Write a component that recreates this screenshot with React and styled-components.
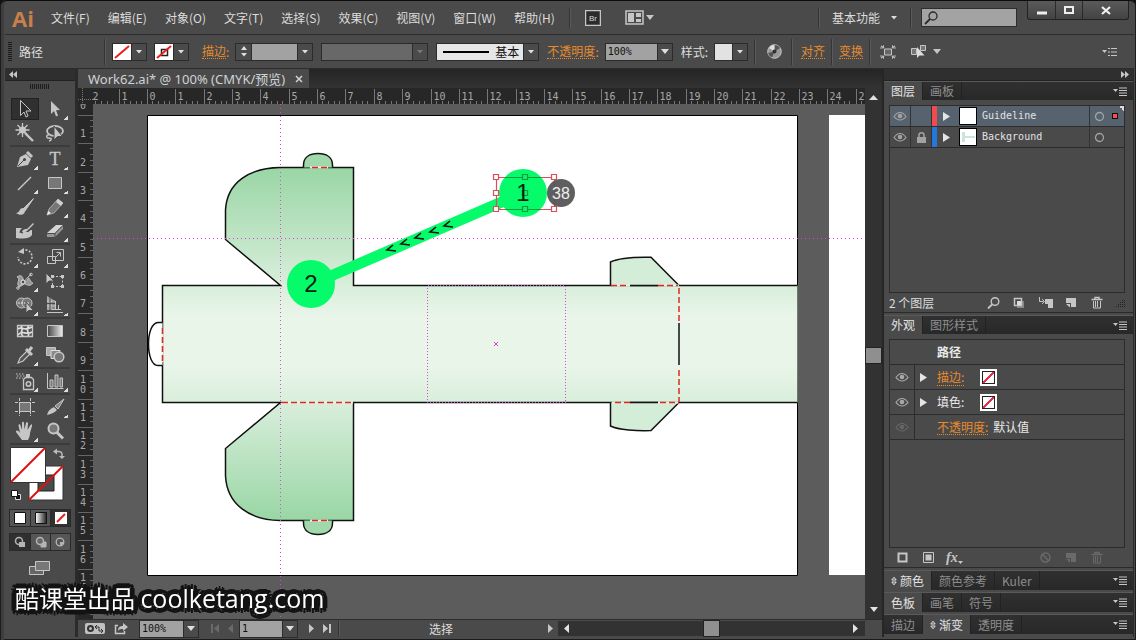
import React from 'react';
import styled, { createGlobalStyle, css } from 'styled-components';

const GlobalStyle = createGlobalStyle`
  * {
    box-sizing: border-box;
  }
  body {
    margin: 0;
    background: #111;
    color: #dcdcdc;
    font-family: 'Noto Sans CJK SC', 'Liberation Sans', sans-serif;
    font-size: 12px;
    line-height: 16px;
    overflow: hidden;
  }
  button, input, select {
    margin: 0;
    padding: 0;
    border: 0;
    border-radius: 0;
    background: none;
    color: inherit;
    font: inherit;
    outline: none;
  }
  select {
    appearance: none;
  }
  svg {
    display: block;
    flex: none;
  }
`;

/* ---------- Window ---------- */

const Window = styled.div`
  display: flex;
  flex-direction: column;
  height: 100vh;
  padding: 1px 2px 3px 5px;
  background: #4a4a4a;
  border-radius: 6px 6px 0 0;
  box-shadow: inset 0 1px 0 #0c0c0c, inset 1px 0 0 #1c1c1c, inset 4px 0 0 #3e3e3e, inset -1px -1px 0 #1c1c1c;
`;

const Bar = styled.div`
  display: flex;
  flex: none;
  align-items: center;
  height: 34px;
  border-bottom: 1px solid #2c2c2c;
`;

const MenuBar = styled(Bar)`
  padding-left: 7px;
`;

const Logo = styled.span`
  width: 39px;
  color: #c87f4b;
  font: bold 22px/30px 'Open Sans', sans-serif;
`;

const Menus = styled.nav`
  display: flex;
  gap: 18px;
  margin-right: 14px;
`;

const Divider = styled.i`
  flex: none;
  width: 2px;
  height: ${({ size }) => size || '26px'};
  border-left: 1px solid #353535;
  border-right: 1px solid #5a5a5a;
`;

const Spacer = styled.div`
  flex: ${({ width }) => (width ? `0 0 ${width}` : '1')};
`;

const Workspace = styled.label`
  display: flex;
  align-items: center;
  gap: 8px;
  margin: 0 12px 0 12px;
  select {
    width: 50px;
  }
`;

const Search = styled.label`
  display: flex;
  align-items: center;
  width: 96px;
  height: 19px;
  margin: 0 10px 0 9px;
  padding-left: 2px;
  border: 1px solid #2e2e2e;
  background: #a3a3a3;
  color: #2b2b2b;
  input {
    width: 70px;
  }
`;

const WindowButtons = styled.div`
  display: flex;
  align-self: flex-start;
  margin-right: 5px;
  border: 1px solid #222;
  border-top: 0;
  border-radius: 0 0 3px 3px;
  background: linear-gradient(#5a5a5a, #434343);
`;

const WindowButton = styled.button`
  display: flex;
  align-items: center;
  justify-content: center;
  width: ${({ wide }) => (wide ? '46px' : '27px')};
  height: 18px;
  color: #eee;
  & + & {
    border-left: 1px solid #2a2a2a;
  }
`;

const IconButton = styled.button`
  display: flex;
  flex: none;
  align-items: center;
  justify-content: center;
  width: ${({ width }) => width || '26px'};
  height: ${({ short }) => (short ? '18px' : '20px')};
  color: ${({ disabled }) => (disabled ? '#6a6a6a' : '#c6c6c6')};
`;

/* ---------- Control bar ---------- */

const Grip = styled.i`
  flex: none;
  width: ${({ wide }) => (wide ? '20px' : '4px')};
  height: ${({ wide }) => (wide ? '5px' : '20px')};
  background: repeating-linear-gradient(
    ${({ wide }) => (wide ? '90deg' : '180deg')}, #1c1c1c 0 1px, #4a4a4a 1px 2px
  );
`;

const ControlBar = styled(Bar)`
  padding-left: 3px;
`;

const Selection = styled.span`
  width: 87px;
  padding-left: 7px;
`;

const Combo = styled.div`
  display: flex;
  flex: none;
  height: 18px;
  margin-right: ${({ gap }) => gap || '8px'};
  border: 1px solid #2b2b2b;
  background: #4b4b4b;
`;

const Arrow = styled.button`
  display: flex;
  align-items: center;
  justify-content: center;
  width: 15px;
  border-left: 1px solid #2b2b2b;
  color: ${({ disabled }) => (disabled ? '#777' : '#dedede')};
`;

const comboField = css`
  width: ${({ width }) => width || '45px'};
  height: 16px;
  background-color: #a2a2a2;
  color: #111;
`;

const Field = styled.input`
  ${comboField}
  padding-left: 2px;
  font: 10px/16px 'DejaVu Sans Mono', monospace;
`;

const Pick = styled.select`
  ${comboField}
  background-color: #757575;
`;

const BrushPick = styled(Pick)`
  padding-left: 58px;
  background: linear-gradient(#000, #000) 6px 7px / 46px 2px no-repeat, #e6e6e6;
  line-height: 16px;
`;

const Stepper = styled.div`
  display: flex;
  flex-direction: column;
  justify-content: space-evenly;
  width: 16px;
  border-right: 1px solid #2b2b2b;
  button {
    display: flex;
    justify-content: center;
    color: #dedede;
  }
`;

const OptionLink = styled.a`
  border-bottom: 1px dotted #e78a2e;
  color: #e78a2e;
  line-height: 14px;
  text-decoration: none;
`;

const Caption = styled.span`
  margin-right: ${({ gap }) => gap || '6px'};
  color: ${({ muted }) => (muted ? '#e78a2e' : '#dcdcdc')};
  white-space: nowrap;
`;

/* ---------- Toolbox ---------- */

const Main = styled.div`
  display: flex;
  flex: 1;
  min-height: 0;
`;

const Toolbox = styled.aside`
  display: flex;
  flex: none;
  flex-direction: column;
  align-items: center;
  width: 73px;
  border-right: 3px solid #2b2b2b;
`;

const Collapse = styled.button`
  display: flex;
  flex: none;
  align-items: center;
  justify-content: ${({ end }) => (end ? 'flex-end' : 'flex-start')};
  width: 100%;
  height: 12px;
  padding: 0 4px;
  border-bottom: 1px solid #222;
  background: #2f2f2f;
  color: #c6c6c6;
`;

const GripRow = styled.div`
  height: 16px;
  padding-top: 3px;
`;

const ToolGroup = styled.div`
  display: grid;
  grid-template-columns: 30px 30px;
  grid-auto-rows: 24px;
  border-bottom: 2px solid #3b3b3b;
`;

const ToolButton = styled.button`
  display: flex;
  align-items: center;
  justify-content: center;
  color: #c6c6c6;
  ${({ active }) => active && `
    margin: 1px;
    border: 1px solid #222;
    background: #303030;`}
  ${({ flyout }) => flyout && `
    background: linear-gradient(135deg, transparent 50%, #ddd 50%) right 2px bottom 1px / 4px 4px no-repeat;`}
`;

const Segments = styled.div`
  display: flex;
  margin-bottom: ${({ gap }) => gap || '7px'};
  border: 1px solid #2a2a2a;
`;

const Segment = styled.button`
  display: flex;
  align-items: center;
  justify-content: center;
  width: 20px;
  height: 16px;
  background: ${({ active }) => (active ? '#303030' : '#565656')};
  color: #b5b5b5;
  & + & {
    border-left: 1px solid #2a2a2a;
  }
`;

/* ---------- Document ---------- */

const Document = styled.main`
  display: flex;
  flex: 1;
  flex-direction: column;
  min-width: 0;
`;

const DocumentTabs = styled.div`
  display: flex;
  flex: none;
  height: 19px;
  background: linear-gradient(#242424, #333);
`;

const DocumentTab = styled.div`
  display: flex;
  align-items: center;
  gap: 10px;
  padding: 0 6px 0 10px;
  background: #4a4a4a;
  color: #cfd3d6;
  font: 13px/18px 'Noto Sans', 'Noto Sans CJK SC', sans-serif;
  white-space: nowrap;
`;

const View = styled.div`
  display: grid;
  flex: 1;
  grid-template-columns: 15px minmax(0, 1fr) 17px;
  grid-template-rows: 16px minmax(0, 1fr);
  min-height: 0;
`;

const RulerBox = styled.div`
  overflow: hidden;
  background: #272727;
`;

const CanvasBox = styled.div`
  overflow: hidden;
  background: #5c5c5c;
`;

const Track = styled.div`
  display: flex;
  flex: ${({ grow }) => (grow ? '1' : 'none')};
  flex-direction: ${({ row }) => (row ? 'row' : 'column')};
  align-items: center;
  min-width: 0;
  background: #323232;
  color: #e2e2e2;
`;

const Thumb = styled.i`
  width: 15px;
  height: 15px;
  background: #8f8f8f;
  outline: 1px solid #222;
`;

const StatusBar = styled.footer`
  display: flex;
  flex: none;
  align-items: center;
  height: 18px;
  padding-left: 4px;
  border-top: 1px solid #2c2c2c;
`;

const Status = styled.span`
  width: 202px;
  text-align: center;
`;

/* ---------- Panels ---------- */

const Panels = styled.aside`
  display: flex;
  flex: none;
  flex-direction: column;
  width: 252px;
  padding-bottom: 1px;
  border-left: 2px solid #262626;
  border-right: 1px solid #2a2a2a;
`;

const PanelTabs = styled.div`
  display: flex;
  flex: none;
  align-items: stretch;
  height: ${({ closed }) => (closed ? '20px' : '19px')};
  margin-bottom: ${({ closed }) => (closed ? '2px' : '0')};
  border-top: 1px solid #5a5a5a;
  background: linear-gradient(#303030, #282828);
`;

const PanelTab = styled.button`
  display: flex;
  align-items: center;
  gap: 3px;
  padding: 0 7px;
  border-right: 1px solid #222;
  background: ${({ active }) => (active ? '#4a4a4a' : 'transparent')};
  color: ${({ active }) => (active ? '#e2e2e2' : '#8e8e8e')};
  white-space: nowrap;
`;

const PanelBody = styled.div`
  display: flex;
  flex: ${({ grow }) => (grow ? '1' : 'none')};
  flex-direction: column;
  height: ${({ height }) => height || 'auto'};
  min-height: 0;
  margin-bottom: 2px;
  padding: 5px 8px 0 5px;
  border-bottom: 1px solid #2a2a2a;
`;

const List = styled.ul`
  flex: 1;
  margin: 0;
  padding: 0;
  border: 1px solid #2c2c2c;
  list-style: none;
`;

const Layer = styled.li`
  display: flex;
  height: 21px;
  border-bottom: 1px solid #2c2c2c;
  background: ${({ active }) => (active ? '#56636f' : 'transparent')};
  color: #e2e2e2;
`;

const LayerCell = styled.span`
  display: flex;
  flex: ${({ width }) => (width ? `0 0 ${width}` : '1')};
  align-items: center;
  justify-content: ${({ center }) => (center ? 'center' : 'flex-start')};
  gap: ${({ gap }) => gap || '9px'};
  padding-left: ${({ pad }) => pad || '0'};
  border-right: 1px solid #333;
  color: ${({ muted }) => (muted ? '#a2a2a2' : 'inherit')};
  font: 10px/20px 'DejaVu Sans Mono', monospace;
  &:last-child {
    border-right: 0;
  }
`;

const LayerColor = styled.i`
  width: 5px;
  background: ${({ color }) => color};
`;

const Thumbnail = styled.i`
  display: block;
  width: 18px;
  height: 18px;
  margin-right: -4px;
  border: 1px solid #000;
  background: #fff;
`;

const Target = styled.span`
  flex: 1;
  align-self: stretch;
  display: flex;
  align-items: center;
  background: linear-gradient(45deg, transparent 50%, #ddd 50%) top right / 5px 5px no-repeat;
  &::before {
    content: '';
    width: 4px;
    height: 4px;
    border: 1px solid #111;
    background: #fa4d52;
  }
`;

const Attribute = styled.li`
  display: flex;
  height: 25px;
  border-bottom: 1px solid #2c2c2c;
`;

const AttributeEye = styled.span`
  display: flex;
  align-items: center;
  justify-content: center;
  width: 25px;
  border-right: 1px solid #2c2c2c;
  color: ${({ dim }) => (dim ? '#666' : '#a8a8a8')};
`;

const AttributeName = styled.div`
  display: flex;
  align-items: center;
  gap: ${({ gap }) => gap || '10px'};
  padding-left: ${({ pad }) => pad || '5px'};
  color: #e8e8e8;
`;

const AttributeLabel = styled.span`
  width: 33px;
`;

const NoneSwatch = styled.i`
  width: 17px;
  height: 17px;
  border: 2px solid #fff;
  outline: 1px solid #222;
  outline-offset: -3px;
  background: linear-gradient(135deg, #fff 44%, #e8304a 44% 56%, #fff 56%);
`;

const PanelFooter = styled.div`
  display: flex;
  flex: none;
  align-items: center;
  height: 19px;
`;

const outline = [[5, 0], [4, 3], [3, 4], [0, 5], [-3, 4], [-4, 3], [-5, 0], [-4, -3], [-3, -4], [0, -5], [3, -4], [4, -3]]
  .map(([x, y]) => `${x}px ${y}px 0 #131313`)
  .join(', ');

const Watermark = styled.div`
  position: fixed;
  bottom: 24px;
  left: 15px;
  color: #fff;
  font-size: 24px;
  line-height: 36px;
  text-shadow: ${outline}, 2px 2px 0 #131313, -2px -2px 0 #131313;
  pointer-events: none;
  white-space: nowrap;
  span {
    font-family: 'Open Sans', sans-serif;
    font-size: 25px;
  }
`;

/* ---------- Icons ---------- */

const Svg = ({ w = 20, h = 20, children, ...rest }) => (
  <svg width={w} height={h} viewBox={`0 0 ${w} ${h}`} fill="none" stroke="currentColor" aria-hidden="true" {...rest}>
    {children}
  </svg>
);

const Down = ({ small }) => (
  <Svg w={8} h={5} stroke="none">
    <path d={small ? 'M1 1h6L4 4.500z' : 'M0 0h8L4 5z'} fill="currentColor" />
  </Svg>
);

const Up = ({ large }) => (
  <Svg w={large ? 9 : 6} h={large ? 5 : 4} stroke="none">
    <path d={large ? 'M0 5h9L4.500 0z' : 'M0 4h6L3 0z'} fill="currentColor" />
  </Svg>
);

const Side = ({ left, bar }) => (
  <Svg w={9} h={9} stroke="none" transform={left ? 'scale(-1 1)' : undefined}>
    <path d={bar ? 'M0 0v9l5-4.500zM6 0h2v9h-2z' : 'M2 0v9l5-4.500z'} fill="currentColor" />
  </Svg>
);

const Chevrons = ({ left }) => (
  <Svg w={8} h={7} stroke="none" transform={left ? 'scale(-1 1)' : undefined}>
    <path d="M0 0l4 3.500l-4 3.500zM4 0l4 3.500l-4 3.500z" fill="currentColor" />
  </Svg>
);

const Eye = () => (
  <Svg w={14} h={10}>
    <path d="M1 5.500C3 2.500 5 1.500 7 1.500s4 1 6 4C11 8 9 9 7 9S3 8 1 5.500z" strokeWidth="1.200" />
    <circle cx="7" cy="5" r="2.300" fill="currentColor" stroke="none" />
  </Svg>
);

const Play = () => <Svg w={7} h={9} stroke="none"><path d="M0 0v9l7-4.500z" fill="#e4e4e4" /></Svg>;

const PanelMenu = () => (
  <Svg w={15} h={9}>
    <path d="M0 2h5L2.500 5z" fill="currentColor" stroke="none" />
    <path d="M6 1h8M6 3.500h8M6 6h8M6 8.500h8" />
  </Svg>
);

const Sorter = () => (
  <Svg w={6} h={10}><path d="M.8 4L3 1.200L5.200 4zM.8 6L3 8.800L5.200 6z" /></Svg>
);

const Trash = () => (
  <Svg w={12} h={13}>
    <path d="M.5 3.500h11M4 3V1.500h4V3" strokeWidth="1.400" />
    <path d="M2.500 5v7h7V5M4.500 5v6M6.500 5v6" />
  </Svg>
);

const NewItem = () => (
  <Svg w={12} h={11} stroke="none">
    <path d="M1 1h10v9H6V6H1z" fill="currentColor" />
    <path d="M1 7h4v3.500z" fill="currentColor" />
  </Svg>
);

const NoColor = ({ size = 18, h = size, stroke }) => (
  <Svg w={size} h={h} stroke="none">
    <path d={`M0 0h${size}v${h}H0z`} fill="#fff" />
    {stroke && <path d="M6.500 5.500h6v6h-6z" stroke="#222" strokeWidth="1.500" />}
    <path d={`M2 ${h - 2}L${size - 2} 2`} stroke="#e8201c" strokeWidth="2" />
  </Svg>
);

const toolIcons = {
  select: <path d="M5.500 1.500v15l3.500-3.500l2 5l2-1l-2-5h5z" fill="#2c2c2c" />,
  direct: <path d="M6 2v13l3-3l2 5.500l2-1l-2-5.200l4-.3z" fill="currentColor" stroke="none" />,
  wand: (
    <>
      <path d="M7.500 0v14M.5 7h14M2.500 2l10 10M12.500 2l-10 10" strokeWidth="1.300" />
      <circle cx="7.500" cy="7" r="3.500" fill="currentColor" stroke="none" />
      <path d="M10 10l8 8" strokeWidth="2.400" />
    </>
  ),
  lasso: (
    <>
      <ellipse cx="10" cy="8" rx="8" ry="5" strokeWidth="1.800" />
      <path d="M4 12c-3-1-3 3 0 3s3 2 0 3" strokeWidth="1.400" />
      <path d="M9 3v14l3.500-3.500h5z" fill="currentColor" stroke="#4a4a4a" />
    </>
  ),
  pen: (
    <>
      <path d="M2 18l3-10l6-3l5 5l-3 6z" fill="currentColor" stroke="none" />
      <path d="M12 3l5 5" strokeWidth="3" />
      <path d="M3 17l6-6" stroke="#444" />
      <circle cx="9.500" cy="10.500" r="1.500" fill="#444" stroke="none" />
    </>
  ),
  type: <text x="10" y="16" textAnchor="middle" fill="currentColor" stroke="currentColor" strokeWidth=".3" fontFamily="Liberation Serif, serif" fontSize="18">T</text>,
  line: <path d="M3 17L16 4" strokeWidth="1.400" />,
  rect: <path d="M3.500 4.500h13v11h-13z" fill="#777" />,
  brush: (
    <>
      <path d="M18.500 1.500L8 12l2 2z" fill="currentColor" />
      <path d="M8 11c-4 0-3 5-7 5c4 3 9 2 9-2z" fill="currentColor" stroke="none" />
    </>
  ),
  pencil: (
    <>
      <path d="M2 18l2-6L13 2l5 4l-9 10z" fill="#777" stroke="#a8a8a8" />
      <path d="M13 2l5 4l-2 3l-5-4z" fill="#d0d0d0" stroke="none" />
      <path d="M2 18l1.500-4l2.500 2z" fill="#eee" stroke="none" />
    </>
  ),
  blob: (
    <>
      <path d="M1 7h6c4 0 2 4 5 4s2-2 5-2v5c-3 4-8 4-16 3z" fill="currentColor" stroke="none" />
      <path d="M6 12c1-4 4-5 7-5L18 2" stroke="#4a4a4a" strokeWidth="3.500" />
      <path d="M7 11c1-3 3-3 5-3L18 2l1 1l-6 6c-2 2-4 3-6 2z" fill="currentColor" stroke="none" />
    </>
  ),
  eraser: (
    <>
      <path d="M2 12l9-8h7l-8 8z" fill="#d4d4d4" stroke="none" />
      <path d="M2 12h8v4H2zM10 12l8-8v4l-8 8z" fill="#969696" stroke="none" />
      <path d="M2 12.500h8l8-8M10 12v4" stroke="#4a4a4a" />
    </>
  ),
  rotate: (
    <>
      <path d="M7 3.500A7 7 0 1 1 3 10" strokeDasharray="2 1.500" strokeWidth="1.600" />
      <path d="M3 5l6-4v6z" fill="currentColor" stroke="none" />
    </>
  ),
  scale: (
    <>
      <path d="M7.500 2.500h11v11h-11zM2.500 9.500h8v7h-8z" />
      <path d="M10 11l5-5M11.500 5.500h4v4" />
    </>
  ),
  width: (
    <>
      <path d="M2 6c4-3 6 0 6 2s4 4 5 0s2 4 5 4c-4 5-8 0-9 1s-5 4-6 1s3-7-1-8z" fill="#969696" />
      <path d="M3 17L16 3" />
      <circle cx="8" cy="11" r="2" fill="#4a4a4a" stroke="#eee" />
      <circle cx="3" cy="17" r="1.300" /><circle cx="16" cy="3.500" r="1.300" />
    </>
  ),
  freeTransform: (
    <>
      <path d="M7.500 5.500h10v10h-10z" strokeDasharray="2 1.500" />
      <path d="M6 4h3v3H6zM16 4h3v3h-3zM6 14h3v3H6zM16 14h3v3h-3z" fill="currentColor" stroke="none" />
      <path d="M1 2v11l3-3h5z" fill="currentColor" stroke="#4a4a4a" />
    </>
  ),
  shapeBuilder: (
    <>
      <circle cx="6.500" cy="8" r="5" fill="#777" /><circle cx="12" cy="8" r="5" fill="#777" />
      <path d="M3 8h12" stroke="#eee" strokeDasharray="2 1" />
      <path d="M11 7v11l2.500-2.500h5z" fill="currentColor" stroke="#4a4a4a" />
    </>
  ),
  perspective: (
    <>
      <path d="M2 1l5 3v11H2z" fill="#a8a8a8" stroke="none" />
      <path d="M7 4l3 2v9H7z" fill="#888" stroke="none" />
      <path d="M2 17.500h16M7 14.500h9M2 6h8M2 11h9M10.500 6v9M13.500 10v5" />
      <path d="M5 2v13M2 8.500h8" stroke="#4a4a4a" />
    </>
  ),
  mesh: (
    <>
      <path d="M2.500 4.500h15v11h-15z" fill="#555" strokeWidth="1.300" />
      <path d="M3 8c4-3 6 3 14-2M3 14c4-6 8 1 14-3M6 5c4 4-3 6 2 10M14 5c-5 4 2 7-1 10" strokeWidth="1.700" stroke="#ddd" />
    </>
  ),
  gradient: (
    <>
      <defs><linearGradient id="toolGradient"><stop stopColor="#444" /><stop offset="1" stopColor="#eee" /></linearGradient></defs>
      <path d="M2.500 4.500h15v11h-15z" fill="url(#toolGradient)" />
    </>
  ),
  eyedropper: (
    <>
      <path d="M3 18l2-5l7-7l3 3l-7 7z" fill="#555" strokeWidth="1.200" />
      <path d="M11 4l6 6M13 7l4-5" strokeWidth="3" />
    </>
  ),
  blend: (
    <>
      <path d="M1.500 2.500h9v8h-9z" fill="#aaa" />
      <path d="M6 5.500h9v8H6z" fill="#888" stroke="#ddd" />
      <circle cx="14" cy="12" r="4.800" fill="#777" strokeWidth="1.500" />
    </>
  ),
  sprayer: (
    <>
      <path d="M1 3h9M2 5h8M1 7h7" strokeDasharray="1.500 1.500" />
      <path d="M8.500 8.500v10h10v-10l-2-2h-6z" strokeWidth="1.300" />
      <path d="M11 3h4v3h-4z" fill="currentColor" stroke="none" />
      <circle cx="13.500" cy="13" r="2.200" strokeWidth="1.600" />
    </>
  ),
  graph: (
    <>
      <path d="M2.500 2v15.500h16" />
      <path d="M5 9h3v7H5zM10 4h3v12h-3zM15 7h2.500v9H15z" fill="#777" />
    </>
  ),
  artboard: (
    <>
      <path d="M4.500 5.500h11v9h-11z" fill="#777" stroke="none" />
      <path d="M0 5.500h20M0 14.500h20M4.500 1v18M15.500 1v18" strokeDasharray="3 1 12 1" />
    </>
  ),
  slice: (
    <>
      <path d="M2 18c1-4 3-6 7-8l3 3c-3 3-6 4-10 5z" fill="currentColor" stroke="none" />
      <path d="M10 9L19 2l-6 10z" fill="#888" />
    </>
  ),
  hand: <path d="M7 19c-2-3-4-5-6-8c0-2 2-2 4 1L3.500 4.500c0-2 2-1.500 2 0L7 9V2c0-2 2-1.500 2 0l.5 6.500L11 2c.5-2 2-1 2 .5L12.500 9L15.500 4c1-1.500 2-.5 1.500 1L15 12c0 3-1 5-2 7z" fill="currentColor" stroke="none" />,
  zoom: (
    <>
      <circle cx="8.500" cy="7.500" r="5" fill="#777" strokeWidth="2" />
      <path d="M12 11.500l6 6" strokeWidth="3" />
    </>
  ),
};

const toolGroups = [
  [['select'], ['direct', 1], ['wand'], ['lasso']],
  [['pen', 1], ['type', 1], ['line', 1], ['rect', 1], ['brush'], ['pencil', 1], ['blob'], ['eraser', 1]],
  [['rotate', 1], ['scale', 1], ['width', 1], ['freeTransform'], ['shapeBuilder', 1], ['perspective', 1]],
  [['mesh'], ['gradient'], ['eyedropper', 1], ['blend']],
  [['sprayer', 1], ['graph', 1]],
  [['artboard'], ['slice', 1], ['hand', 1], ['zoom']],
];

const FillStroke = () => (
  <Svg w={60} h={64} stroke="none">
    <path d="M19 21h34v34H19z" fill="#fff" stroke="#333" />
    <path d="M28 30h16v16H28z" fill="#4a4a4a" stroke="#222" />
    <path d="M19 55L53 21" stroke="#e01010" strokeWidth="2" />
    <path d="M.5 2.500h35v35H.5z" fill="#fff" stroke="#333" />
    <path d="M1 37L35 3" stroke="#e01010" strokeWidth="2" />
    <path d="M46 6.500h3c3 0 3 2 3 5" stroke="#bbb" strokeWidth="1.500" />
    <path d="M43 6.500l4-3v6zM49 11h6l-3 3z" fill="#bbb" />
    <path d="M5.500 49.500h5v5h-5z" fill="#111" stroke="#ddd" />
    <path d="M1.500 45.500h6v6h-6z" fill="#fff" stroke="#111" />
  </Svg>
);

/* ---------- Rulers and artwork ---------- */

const CM = 28.35;
const rulerFont = { fill: '#a8a8a8', stroke: 'none', fontFamily: 'DejaVu Sans Mono, monospace', fontSize: 10 };
const range = (from, to) => Array.from({ length: to - from + 1 }, (_, i) => from + i);

const RulerTop = () => (
  <Svg w={3000} h={16} stroke="#777">
    {range(-2, Math.floor((window.innerWidth - 418) / CM)).map((n) => {
      const x = Math.round(55 + n * CM) - 0.5;
      return (
        <g key={n}>
          <path d={`M${x} 1v15`} />
          {[1, 2, 3, 4].map((m) => <path key={m} d={`M${Math.round(x + m * CM / 5) - 0.5} 13v3`} />)}
          <text x={x + 2} y="12" {...rulerFont}>{Math.abs(n)}</text>
        </g>
      );
    })}
  </Svg>
);

const RulerSide = () => (
  <Svg w={15} h={2000} stroke="#666">
    {range(0, Math.floor((window.innerHeight - 136) / CM)).map((n) => {
      const y = Math.round(11 + n * CM) + 0.5;
      const digits = String(n).split('');
      return (
        <g key={n}>
          <path d={`M0 ${y}h15`} />
          {[1, 2, 3, 4].map((m) => <path key={m} d={`M12 ${Math.round(y + m * CM / 5) - 0.5}h3`} />)}
          {digits.map((d, i) => (
            <text key={i} x="2" y={y - 7 - (digits.length - 1 - i) * 10} {...rulerFont}>{d}</text>
          ))}
        </g>
      );
    })}
  </Svg>
);

const handles = [[496, 177], [525, 177], [554, 177], [496, 193], [525, 193], [496, 209], [525, 209], [554, 209]];

const SelectionBox = ({ color, fill, ...rest }) => (
  <g stroke={color} {...rest}>
    <path d="M496.500 177.500h58v32h-58z" />
    {handles.map(([x, y]) => <path key={`${x}-${y}`} d={`M${x - 2.5} ${y - 2.5}h5v5h-5z`} fill={fill} />)}
  </g>
);

// Drawn in window coordinates; the view box starts at the canvas corner
const Artwork = () => (
  <svg width="773" height="515" viewBox="93 104 773 515" fill="none" stroke="#111" strokeWidth="1.500" role="img" aria-label="Artboard">
    <defs>
      <linearGradient id="body" x1="0" y1="0" x2="0" y2="1">
        <stop stopColor="#d9eedb" />
        <stop offset=".25" stopColor="#e8f5e8" />
        <stop offset=".7" stopColor="#e8f5e8" />
        <stop offset="1" stopColor="#d9eedb" />
      </linearGradient>
      <linearGradient id="wingUp" x1="0" y1="1" x2="0" y2="0">
        <stop stopColor="#d9eedb" /><stop offset="1" stopColor="#99d6a5" />
      </linearGradient>
      <linearGradient id="wingDown" x1="0" y1="0" x2="0" y2="1">
        <stop stopColor="#d9eedb" /><stop offset="1" stopColor="#99d6a5" />
      </linearGradient>
      <clipPath id="startDot"><circle cx="523" cy="193" r="24" /></clipPath>
    </defs>
    <path d="M147.500 115.500h650v460h-650z" fill="#fff" stroke="#000" strokeWidth="1" />
    <path d="M829 115h60v460h-60z" fill="#fff" stroke="none" />

    <path d="M162.500 285.500h635v117h-635z" fill="url(#body)" stroke="none" />
    <path d="M280.500 285.500L225.500 239.500V210C227 182 250 168 280 167.500h73.500V286z" fill="url(#wingUp)" stroke="none" />
    <path d="M280.500 402.500L225.500 448.500V476C227 505 250 520 280 520.500h73.500V402.500z" fill="url(#wingDown)" stroke="none" />
    <path d="M797 285.500H353.500V167.500H280C250 168 227 182 225.500 210V239.500L280.500 285.500H162.500V402.500H280.500L225.500 448.500V476C227 505 250 520 280 520.500H353.500V402.500H797" />
    <path d="M303.500 167.500V165C303.500 157 310 153.500 318 153.500S332.500 157 332.500 165V167.500" fill="#a0d9ab" />
    <path d="M303.500 520.500V523C303.500 531 310 534.500 318 534.500S332.500 531 332.500 523V520.500" fill="#a0d9ab" />
    <path d="M162.500 322.500H158C152 323 148.500 332 148.500 344S152 365.500 158 365.500H162.500" fill="#fff" />
    <path d="M610.500 285.500V262C620 257.500 638 257 651 257.300L679 285.500" fill="#d4edd8" />
    <path d="M610.500 402.500V426C618 430 638 431 651 430.500L679 402.500" fill="#d4edd8" />
    <path d="M679 323v42M630 285.500h28M630 402.500h28" />
    <g stroke="#e4f3e5" strokeWidth="2">
      <path d="M310 167.500h18M162.500 328v34M282 402.500h71M612 285.500h18M658 285.500h21M612 402.500h18M658 402.500h21M310 520.500h18" />
    </g>
    <g stroke="#e02a20" strokeDasharray="6 3">
      <path d="M312 167.500h17M162.500 328v34M282 402.500h70M611 285.500h18M658 285.500h20M679 288v35M679 370v32M615 402.500h15M660 402.500h19M312 520.500h17" />
    </g>

    <g stroke="#dd44dd" strokeWidth="1" strokeDasharray="1 3" shapeRendering="crispEdges">
      <path d="M280.500 104v515M93 238.500h773" />
      <path d="M427.500 285.500h138v117h-138z" strokeDasharray="1 2" />
      <path d="M494 342l4 4M498 342l-4 4" strokeDasharray="none" />
    </g>

    <path d="M311 284.500L523 193" stroke="#05fb6a" strokeWidth="11" />
    <g strokeWidth="1.600">
      {[[387, 250], [401, 244], [415, 238], [430, 232], [444, 226]].map(([x, y]) => (
        <path key={x} d={`M${x + 6} ${y - 5}l-6 5l9 1`} />
      ))}
    </g>
    <circle cx="311" cy="284" r="24" fill="#05fb6a" stroke="none" />
    <circle cx="523" cy="193" r="24" fill="#05fb6a" stroke="none" />
    <g strokeWidth="1.200">
      <SelectionBox color="#d9505a" fill="#fff" />
      <SelectionBox color="#0b9a40" fill="#05fb6a" clipPath="url(#startDot)" />
    </g>
    <g fontFamily="Liberation Sans, sans-serif" fontSize="24" textAnchor="middle" fill="#0a1f10" stroke="none">
      <text x="311" y="292">2</text>
      <text x="523" y="201">1</text>
    </g>
    <circle cx="561" cy="193" r="14" fill="#555" fillOpacity=".94" stroke="none" />
    <text x="561" y="199" fontFamily="Liberation Sans, sans-serif" fontSize="16" textAnchor="middle" fill="#eee" stroke="none">38</text>
  </svg>
);

/* ---------- Sections ---------- */

const menus = ['文件(F)', '编辑(E)', '对象(O)', '文字(T)', '选择(S)', '效果(C)', '视图(V)', '窗口(W)', '帮助(H)'];

const TopMenu = () => (
  <MenuBar as="header">
    <Logo>Ai</Logo>
    <Menus>
      {menus.map((menu) => <button key={menu}>{menu}</button>)}
    </Menus>
    <Divider size="20px" />
    <Spacer width="12px" />
    <IconButton width="20px" aria-label="Bridge">
      <Svg w={16} h={16}>
        <path d="M.5.5h15v15H.5z" fill="#2c2c2c" strokeWidth="1.500" />
        <text x="8" y="11" textAnchor="middle" fontSize="8" fontFamily="Liberation Sans, sans-serif" fill="#ddd" stroke="none">Br</text>
      </Svg>
    </IconButton>
    <Spacer width="21px" />
    <IconButton width="32px" aria-label="排列文档">
      <Svg w={19} h={15}><path d="M1 1h17v13H1z" strokeWidth="1.500" /><path d="M3 3h6v9H3zM11 3h5v4h-5zM11 9h5v3h-5z" fill="currentColor" stroke="none" /></Svg>
      <Spacer width="2px" />
      <Down />
    </IconButton>
    <Spacer />
    <Divider size="20px" />
    <Workspace>
      <select aria-label="工作区"><option>基本功能</option></select>
      <Down small />
    </Workspace>
    <Divider size="20px" />
    <Search>
      <Svg w={16} h={14}><circle cx="9" cy="5" r="4" strokeWidth="1.300" /><path d="M6 8l-5 5" strokeWidth="1.800" /></Svg>
      <input type="text" aria-label="搜索" />
    </Search>
    <WindowButtons>
      <WindowButton aria-label="最小化"><Svg w={10} h={10}><path d="M0 8h10" strokeWidth="3" /></Svg></WindowButton>
      <WindowButton aria-label="最大化"><Svg w={10} h={8}><path d="M1 1h8v6H1z" strokeWidth="2" /></Svg></WindowButton>
      <WindowButton wide aria-label="关闭"><Svg w={10} h={9}><path d="M1 1l8 7M9 1L1 8" strokeWidth="2.200" /></Svg></WindowButton>
    </WindowButtons>
  </MenuBar>
);

const Controls = () => (
  <ControlBar>
    <Grip />
    <Selection>路径</Selection>
    <Spacer width="5px" />
    <Divider />
    <Spacer width="6px" />
    <Combo gap="7px"><NoColor h={16} /><Arrow aria-label="填色"><Down small /></Arrow></Combo>
    <Combo gap="13px"><NoColor h={16} stroke /><Arrow aria-label="描边颜色"><Down small /></Arrow></Combo>
    <OptionLink href="#stroke">描边</OptionLink>
    <Caption muted>:</Caption>
    <Combo>
      <Stepper>
        <button aria-label="增大"><Up /></button>
        <button aria-label="减小"><Down small /></button>
      </Stepper>
      <Field aria-label="描边粗细" />
      <Arrow aria-label="粗细选项"><Down small /></Arrow>
    </Combo>
    <Combo>
      <Pick width="90px" disabled aria-label="宽度配置"><option /></Pick>
      <Arrow disabled aria-label="配置选项"><Down small /></Arrow>
    </Combo>
    <Combo>
      <BrushPick width="86px" aria-label="画笔"><option>基本</option></BrushPick>
      <Arrow aria-label="画笔选项"><Down small /></Arrow>
    </Combo>
    <OptionLink href="#opacity">不透明度</OptionLink>
    <Caption muted>:</Caption>
    <Combo>
      <Field width="51px" defaultValue="100%" aria-label="不透明度" />
      <Arrow aria-label="不透明度选项"><Down /></Arrow>
    </Combo>
    <Caption>样式:</Caption>
    <Combo gap="6px">
      <Svg w={17} h={16} stroke="none"><path d="M0 0h17v16H0z" fill="#e2e2e2" /></Svg>
      <Arrow aria-label="样式"><Down small /></Arrow>
    </Combo>
    <Divider />
    <Spacer width="5px" />
    <IconButton aria-label="重新着色图稿">
      <Svg w={15} h={15}>
        <circle cx="7.500" cy="7.500" r="6.800" fill="#999" />
        <path d="M7.500 7.500V1A6.500 6.500 0 0 1 13 4zM7.500 7.500L1 9A6.500 6.500 0 0 0 5 13.500z" fill="#555" stroke="none" />
        <path d="M7.500 7.500L2 4A6.500 6.500 0 0 1 7.500 1z" fill="#ddd" stroke="none" />
        <circle cx="7.500" cy="7.500" r="2" fill="#333" stroke="none" />
      </Svg>
    </IconButton>
    <Spacer width="4px" />
    <Divider />
    <Spacer width="8px" />
    <OptionLink href="#align">对齐</OptionLink>
    <Spacer width="6px" />
    <Divider />
    <Spacer width="6px" />
    <OptionLink href="#transform">变换</OptionLink>
    <Spacer width="6px" />
    <Divider />
    <Spacer width="4px" />
    <IconButton aria-label="隔离选中的对象">
      <Svg w={16} h={14}>
        <path d="M4.500 4h7v6h-7z" fill="#666" />
        <path d="M1 1l3 2M15 1l-3 2M1 13l3-2M15 13l-3-2" strokeWidth="1.300" />
        <path d="M0 3h3M13 3h3M0 11h3M13 11h3M3.500 0v3M12.500 0v3M3.500 11v3M12.500 11v3" strokeWidth=".8" />
      </Svg>
    </IconButton>
    <Spacer width="6px" />
    <IconButton aria-label="选择类似的对象" width="36px">
      <Svg w={17} h={15}>
        <path d="M1.500 4.500h5v6h-5zM10.500 1.500h5v5h-5z" fill="#777" />
        <path d="M7 3v11l2.500-2.500h5z" fill="#ddd" stroke="none" />
      </Svg>
      <Spacer width="6px" />
      <Down />
    </IconButton>
    <Spacer />
    <IconButton width="50px" aria-label="控制面板菜单">
      <Svg w={15} h={10}><path d="M0 3h5L2.500 6z" fill="currentColor" stroke="none" /><path d="M6 1.500h2M9 1.500h6M6 5h2M9 5h6M6 8.500h2M9 8.500h6" /></Svg>
    </IconButton>
  </ControlBar>
);

const Tools = () => (
  <Toolbox>
    <Collapse aria-label="折叠"><Chevrons left /></Collapse>
    <GripRow><Grip wide as="div" /></GripRow>
    {toolGroups.map((group, i) => (
      <ToolGroup key={i}>
        {group.map(([name, flyout]) => (
          <ToolButton key={name} active={name === 'select'} flyout={flyout} aria-label={name}>
            <Svg>{toolIcons[name]}</Svg>
          </ToolButton>
        ))}
      </ToolGroup>
    ))}
    <FillStroke />
    <Segments gap="6px">
      <Segment aria-label="颜色"><Svg w={12} h={12} stroke="#111"><path d="M.5.5h11v11H.5z" fill="#fff" /></Svg></Segment>
      <Segment aria-label="渐变">
        <Svg w={12} h={12} stroke="#111">
          <defs><linearGradient id="mode"><stop stopColor="#fff" /><stop offset="1" stopColor="#222" /></linearGradient></defs>
          <path d="M.5.5h11v11H.5z" fill="url(#mode)" />
        </Svg>
      </Segment>
      <Segment active aria-label="无"><NoColor size={12} /></Segment>
    </Segments>
    <Segments>
      <Segment active aria-label="正常绘图"><Svg w={12} h={12}><circle cx="5" cy="5" r="3.500" strokeWidth="1.500" /><path d="M5 6h6v5H5z" fill="currentColor" stroke="none" /></Svg></Segment>
      <Segment aria-label="背面绘图"><Svg w={12} h={12}><path d="M6 6h5v5H6z" fill="currentColor" /><circle cx="5" cy="5" r="3.500" fill="#666" strokeWidth="1.500" /></Svg></Segment>
      <Segment aria-label="内部绘图"><Svg w={12} h={12}><circle cx="5" cy="6" r="3.800" strokeWidth="1.300" /><path d="M5 6h4v1L6 9.500H5z" fill="currentColor" stroke="none" /></Svg></Segment>
    </Segments>
    <IconButton aria-label="更改屏幕模式">
      <Svg w={22} h={16}><path d="M.5 6.500h14v8H.5z" fill="#666" /><path d="M6.500 1.500h14v9h-14z" fill="#777" /></Svg>
    </IconButton>
  </Toolbox>
);

const DocumentView = () => (
  <Document>
    <DocumentTabs>
      <DocumentTab>
        Work62.ai* @ 100% (CMYK/预览)
        <button aria-label="关闭文档"><Svg w={8} h={8}><path d="M1 1l6 6M7 1L1 7" strokeWidth="1.500" /></Svg></button>
      </DocumentTab>
    </DocumentTabs>
    <View>
      <RulerBox><Svg w={15} h={16} stroke="#777"><path d="M0 11.500h15M4.500 0v16" strokeDasharray="1 1" /></Svg></RulerBox>
      <RulerBox><RulerTop /></RulerBox>
      <Track><Spacer /><Up large /><Spacer width="4px" /></Track>
      <RulerBox><RulerSide /></RulerBox>
      <CanvasBox><Artwork /></CanvasBox>
      <Track><Spacer /><Thumb /><Spacer /><Down /><Spacer width="7px" /></Track>
    </View>
    <StatusBar>
      <IconButton short aria-label="同步设置">
        <Svg w={20} h={12}>
          <rect width="20" height="11" rx="2" fill="#c0c0c0" stroke="none" />
          <circle cx="5.500" cy="5.500" r="2.500" stroke="#333" strokeWidth="2" />
          <path d="M11 4h3v4h3M12 2l-2 2l2 2M16 6l2 2l-2 2" stroke="#333" />
        </Svg>
      </IconButton>
      <IconButton short aria-label="共享">
        <Svg w={14} h={12}><path d="M4 2.500H1.500v8h9V8" strokeWidth="1.500" /><path d="M4 8c0-4 2-5 5-5V0l5 4l-5 4V6C7 6 5 6 4 8z" fill="currentColor" stroke="none" /></Svg>
      </IconButton>
      <Spacer width="5px" />
      <Combo><Field width="43px" defaultValue="100%" aria-label="缩放" /><Arrow aria-label="缩放选项"><Down /></Arrow></Combo>
      <IconButton short width="14px" disabled aria-label="首项"><Side left bar /></IconButton>
      <IconButton short width="18px" disabled aria-label="上一项"><Side left /></IconButton>
      <Combo gap="6px"><Field width="42px" defaultValue="1" aria-label="画板" /><Arrow aria-label="画板选项"><Down /></Arrow></Combo>
      <IconButton short width="14px" aria-label="下一项"><Side /></IconButton>
      <IconButton short width="18px" aria-label="末项"><Side bar /></IconButton>
      <Spacer width="2px" />
      <Divider size="16px" />
      <Status>选择</Status>
      <IconButton short width="16px" aria-label="状态选项"><Side /></IconButton>
      <Track row grow>
        <Spacer width="4px" /><Side left /><Spacer /><Thumb /><Spacer /><Side /><Spacer width="5px" />
      </Track>
      <Spacer width="17px" />
    </StatusBar>
  </Document>
);

const TabRow = ({ tabs, active, sorted, closed }) => (
  <PanelTabs closed={closed} role="tablist">
    {tabs.map((tab) => (
      <PanelTab key={tab} role="tab" active={tab === active} aria-selected={tab === active}>
        {tab === sorted && <Sorter />}
        {tab}
      </PanelTab>
    ))}
    <Spacer />
    <IconButton short aria-label="面板菜单"><PanelMenu /></IconButton>
  </PanelTabs>
);

const Circle = () => <Svg w={11} h={11}><circle cx="5.500" cy="5.500" r="4" strokeWidth="1.300" /></Svg>;

const LayersPanel = () => (
  <>
    <TabRow tabs={['图层', '画板']} active="图层" />
    <PanelBody height="213px">
      <List>
        <Layer active>
          <LayerCell width="21px" center muted><Eye /></LayerCell>
          <LayerCell width="21px" />
          <LayerColor color="#f34a50" />
          <LayerCell pad="6px"><Play /><Thumbnail />Guideline</LayerCell>
          <LayerCell width="34px" gap="7px" pad="4px" muted><Circle /><Target /></LayerCell>
        </Layer>
        <Layer>
          <LayerCell width="21px" center muted><Eye /></LayerCell>
          <LayerCell width="21px" center muted>
            <Svg w={9} h={11}><path d="M2 5V3c0-3 5-3 5 0v2" strokeWidth="1.500" /><path d="M0 5h9v6H0z" fill="currentColor" stroke="none" /></Svg>
          </LayerCell>
          <LayerColor color="#2477dc" />
          <LayerCell pad="6px">
            <Play />
            <Thumbnail>
              <Svg w={16} h={16} stroke="none"><path d="M2 3h3v4h10v2H5v4H2z" fill="#c9e5dc" /></Svg>
            </Thumbnail>
            Background
          </LayerCell>
          <LayerCell width="34px" pad="4px" muted><Circle /></LayerCell>
        </Layer>
      </List>
      <PanelFooter>
        <span>2 个图层</span>
        <Spacer />
        <IconButton short aria-label="定位对象"><Svg w={13} h={12}><circle cx="8" cy="4.500" r="3.800" strokeWidth="1.400" /><path d="M5 7.500L1 11.500" strokeWidth="1.800" /></Svg></IconButton>
        <IconButton short aria-label="剪切蒙版"><Svg w={12} h={12}><path d="M4 4h7v7H4z" fill="#888" stroke="none" /><path d="M1.500 1.500h7v7h-7z" strokeWidth="1.500" /><path d="M4 4h4v4H4z" fill="#ddd" stroke="none" /></Svg></IconButton>
        <IconButton short aria-label="新建子图层"><Svg w={15} h={12}><path d="M1.500 0v4.500h4M4 2l2.500 2.500L4 7" /><path d="M7 2h8v9h-5V7H7z" fill="currentColor" stroke="none" /></Svg></IconButton>
        <IconButton short aria-label="新建图层"><NewItem /></IconButton>
        <IconButton short aria-label="删除图层"><Trash /></IconButton>
        <Spacer width="6px" />
        <Svg w={9} h={9} stroke="#222"><path d="M0 8.500h9M2 6.500h7M4 4.500h5M6 2.500h3" strokeDasharray="1 1" /></Svg>
      </PanelFooter>
    </PanelBody>
  </>
);

const AppearancePanel = () => (
  <>
    <TabRow tabs={['外观', '图形样式']} active="外观" />
    <PanelBody grow>
      <List>
        <Attribute><AttributeName pad="47px"><strong>路径</strong></AttributeName></Attribute>
        <Attribute>
          <AttributeEye><Eye /></AttributeEye>
          <AttributeName>
            <Play />
            <AttributeLabel><OptionLink href="#stroke">描边:</OptionLink></AttributeLabel>
            <NoneSwatch />
          </AttributeName>
        </Attribute>
        <Attribute>
          <AttributeEye><Eye /></AttributeEye>
          <AttributeName><Play /><AttributeLabel>填色:</AttributeLabel><NoneSwatch /></AttributeName>
        </Attribute>
        <Attribute>
          <AttributeEye dim><Eye /></AttributeEye>
          <AttributeName pad="22px" gap="5px"><OptionLink href="#opacity">不透明度:</OptionLink>默认值</AttributeName>
        </Attribute>
      </List>
      <PanelFooter>
        <IconButton short aria-label="添加新描边"><Svg w={11} h={11}><path d="M1.500 1.500h8v8h-8z" strokeWidth="2" /></Svg></IconButton>
        <IconButton short aria-label="添加新填色"><Svg w={11} h={11}><path d="M.5.5h10v10H.5z" /><path d="M2.500 2.500h6v6h-6z" fill="currentColor" stroke="none" /></Svg></IconButton>
        <IconButton short aria-label="添加新效果">
          <Svg w={18} h={16} stroke="none">
            <text x="1" y="12" fill="currentColor" fontSize="14" fontStyle="italic" fontWeight="bold" fontFamily="Liberation Serif, serif">fx</text>
            <path d="M13 11h5l-2.500 3z" fill="currentColor" />
          </Svg>
        </IconButton>
        <Spacer />
        <IconButton short disabled aria-label="清除外观"><Svg w={11} h={11}><circle cx="5.500" cy="5.500" r="4.500" strokeWidth="1.500" /><path d="M2.500 2.500l6 6" strokeWidth="1.500" /></Svg></IconButton>
        <IconButton short disabled aria-label="复制所选项目"><NewItem /></IconButton>
        <IconButton short disabled aria-label="删除所选项目"><Trash /></IconButton>
        <Spacer width="15px" />
      </PanelFooter>
    </PanelBody>
  </>
);

const App = () => (
  <>
    <GlobalStyle />
    <Window>
      <TopMenu />
      <Controls />
      <Main>
        <Tools />
        <DocumentView />
        <Panels>
          <Collapse end aria-label="折叠面板"><Chevrons /></Collapse>
          <LayersPanel />
          <AppearancePanel />
          <TabRow closed tabs={['颜色', '颜色参考', 'Kuler']} active="颜色" sorted="颜色" />
          <TabRow closed tabs={['色板', '画笔', '符号']} active="色板" />
          <TabRow closed tabs={['描边', '渐变', '透明度']} active="渐变" sorted="渐变" />
        </Panels>
      </Main>
    </Window>
    <Watermark>酷课堂出品 <span>coolketang.com</span></Watermark>
  </>
);

export default App;
